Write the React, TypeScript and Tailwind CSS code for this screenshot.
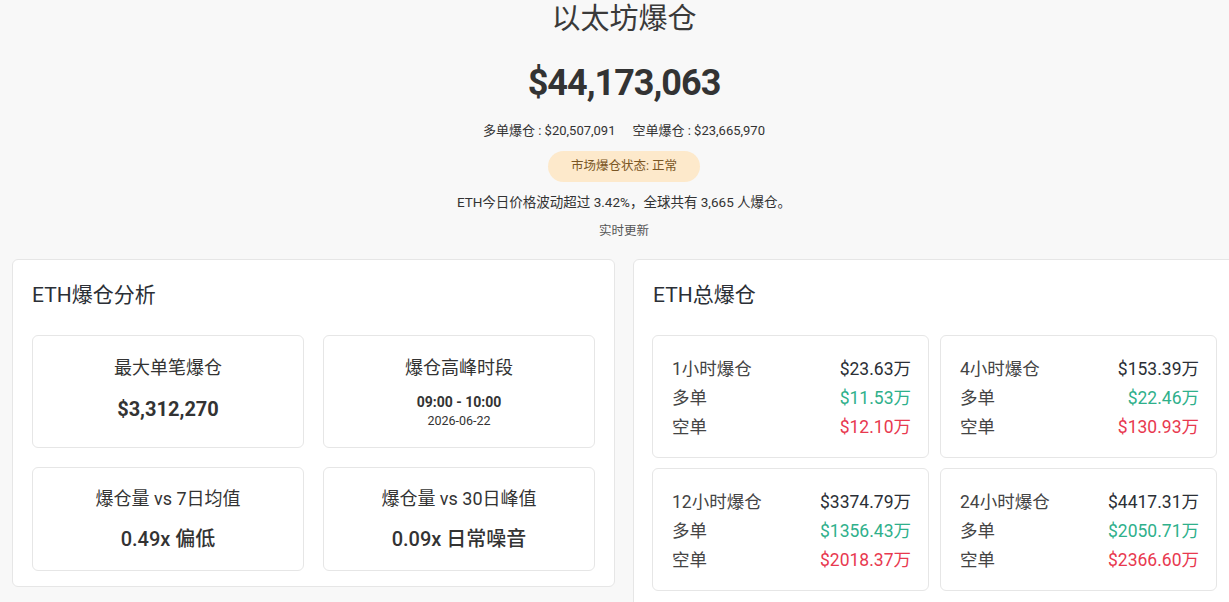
import React from "react";

const font = { fontFamily: '"Roboto", "Noto Sans CJK SC", sans-serif' };

type Period = {
  label: string;
  total: string;
  long: string;
  short: string;
};

const periods: Period[] = [
  { label: "1小时爆仓", total: "$23.63万", long: "$11.53万", short: "$12.10万" },
  { label: "4小时爆仓", total: "$153.39万", long: "$22.46万", short: "$130.93万" },
  { label: "12小时爆仓", total: "$3374.79万", long: "$1356.43万", short: "$2018.37万" },
  { label: "24小时爆仓", total: "$4417.31万", long: "$2050.71万", short: "$2366.60万" },
];

function StatBox({ children, h }: { children: React.ReactNode; h: string }) {
  return (
    <div
      className={`flex flex-col items-center rounded-md border border-[#e6e6e6] bg-white ${h}`}
    >
      {children}
    </div>
  );
}

function PeriodBox({ p }: { p: Period }) {
  return (
    <div className="h-[123px] rounded-md border border-[#e6e6e6] bg-white pl-[19px] pr-[17px] pt-[19px] text-[17.5px] leading-[29px]">
      <div className="flex justify-between">
        <span className="text-[#444]">{p.label}</span>
        <span className="text-[#2b2f36]">{p.total}</span>
      </div>
      <div className="flex justify-between">
        <span className="text-[#444]">多单</span>
        <span className="text-[#2fb08b]">{p.long}</span>
      </div>
      <div className="flex justify-between">
        <span className="text-[#444]">空单</span>
        <span className="text-[#e8394f]">{p.short}</span>
      </div>
    </div>
  );
}

export default function App() {
  return (
    <div
      className="h-[602px] w-[1229px] overflow-hidden bg-[#f8f8f8] text-[#333]"
      style={font}
    >
      <div className="w-[1248px]">
        <div className="flex flex-col items-center">
          <h1 className="mt-[1px] text-[29px] leading-[36px] font-normal text-[#3a3a3a]">
            以太坊爆仓
          </h1>
          <div className="mt-[24px] text-[36px] leading-[44px] font-bold tracking-[-1px] text-[#333]">
            $44,173,063
          </div>
          <div className="mt-[17px] flex gap-[17px] text-[13px] leading-[18px] text-[#333]">
            <span>多单爆仓 : $20,507,091</span>
            <span>空单爆仓 : $23,665,970</span>
          </div>
          <div className="mt-[11px] flex h-[31px] w-[152px] items-center justify-center rounded-full bg-[#fde9cb] text-[12.5px] text-[#7a5624]">
            市场爆仓状态: 正常
          </div>
          <div className="mt-[11px] text-[13.5px] leading-[18px] text-[#333]">
            ETH今日价格波动超过 3.42%，全球共有 3,665 人爆仓。
          </div>
          <div className="mt-[11px] text-[12.5px] leading-[18px] text-[#555]">
            实时更新
          </div>
        </div>

        <div className="mt-[19px] flex w-[1236px] gap-[18px] pl-[12px]">
          {/* liquidation analysis */}
          <section className="h-[328px] w-[603px] shrink-0 rounded-md border border-[#e6e6e6] bg-white px-[19px] pt-[21px]">
            <h2 className="text-[21px] leading-[28px] font-normal text-[#2b2f36]">
              ETH爆仓分析
            </h2>
            <div className="mt-[26px] grid grid-cols-2 gap-x-[19px] gap-y-[19px]">
              <StatBox h="h-[113px]">
                <div className="mt-[20px] text-[18px] leading-[24px] text-[#333]">最大单笔爆仓</div>
                <div className="mt-[15px] text-[20px] leading-[28px] font-bold text-[#333]">
                  $3,312,270
                </div>
              </StatBox>
              <StatBox h="h-[113px]">
                <div className="mt-[20px] text-[18px] leading-[24px] text-[#333]">爆仓高峰时段</div>
                <div className="mt-[13px] text-[14px] leading-[18px] font-bold text-[#333]">
                  09:00 - 10:00
                </div>
                <div className="mt-[1px] text-[12.5px] leading-[18px] text-[#333]">2026-06-22</div>
              </StatBox>
              <StatBox h="h-[104px]">
                <div className="mt-[19px] text-[18px] leading-[24px] text-[#333]">
                  爆仓量 vs 7日均值
                </div>
                <div className="mt-[14px] text-[20px] leading-[28px] font-medium text-[#333]">
                  0.49x 偏低
                </div>
              </StatBox>
              <StatBox h="h-[104px]">
                <div className="mt-[19px] text-[18px] leading-[24px] text-[#333]">
                  爆仓量 vs 30日峰值
                </div>
                <div className="mt-[14px] text-[20px] leading-[28px] font-medium text-[#333]">
                  0.09x 日常噪音
                </div>
              </StatBox>
            </div>
          </section>

          {/* total liquidations */}
          <section className="h-[360px] w-[603px] shrink-0 rounded-md border border-[#e6e6e6] bg-white px-[18px] pt-[21px]">
            <h2 className="ml-[1px] text-[21px] leading-[28px] font-normal text-[#2b2f36]">
              ETH总爆仓
            </h2>
            <div className="mt-[26px] grid grid-cols-2 gap-x-[11px] gap-y-[10px]">
              {periods.map((p) => (
                <PeriodBox key={p.label} p={p} />
              ))}
            </div>
          </section>
        </div>
      </div>
    </div>
  );
}
